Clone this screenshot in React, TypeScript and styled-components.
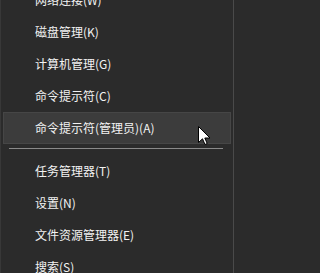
import React from 'react';
import styled, { createGlobalStyle } from 'styled-components';

type MenuEntry = { label: string; active?: boolean } | 'separator';

const entries: MenuEntry[] = [
	{ label: '网络连接(W)' },
	{ label: '磁盘管理(K)' },
	{ label: '计算机管理(G)' },
	{ label: '命令提示符(C)' },
	{ label: '命令提示符(管理员)(A)', active: true },
	'separator',
	{ label: '任务管理器(T)' },
	{ label: '设置(N)' },
	{ label: '文件资源管理器(E)' },
	{ label: '搜索(S)' },
];

const GlobalStyle = createGlobalStyle`
	html, body {
		margin: 0;
		padding: 0;
		background: #2b2b2b;
		overflow: hidden;
	}
`;

const Menu = styled.div`
	box-sizing: border-box;
	width: 234px;
	height: 300px;
	margin-top: -17px;
	background: #2b2b2b;
	border-left: 1px solid #383838;
	border-right: 1px solid #4a4a4a;
	display: flex;
	flex-direction: column;
	font-family: 'Noto Sans CJK SC', 'Noto Sans', sans-serif;
	font-size: 12px;
	color: #f2f2f2;
`;

const Item = styled.div<{ $active?: boolean }>`
	position: relative;
	box-sizing: border-box;
	height: 33px;
	margin: 0 2px;
	padding-left: 31px;
	display: flex;
	align-items: center;
	white-space: nowrap;
	background: ${(props) => (props.$active ? '#3c3c3c' : 'transparent')};
	border: 1px solid ${(props) => (props.$active ? '#464646' : 'transparent')};
`;

const Separator = styled.div`
	height: 1px;
	margin: 4px 10px 5px 8px;
	background: #8a8a8a;
`;

const Pointer = styled.svg`
	position: absolute;
	left: 194px;
	top: 13px;
`;

const Cursor = () => (
	<Pointer width="13" height="20" viewBox="0 0 13 20">
		<path
			d="M0.5 0.5 L0.5 16.5 L4.5 12.8 L7 18.5 L9.2 17.5 L6.8 12 L12 12 Z"
			fill="#ffffff"
			stroke="#000000"
			strokeWidth="1"
			strokeLinejoin="miter"
		/>
	</Pointer>
);

const App: React.FC = () => {
	return (
		<>
			<GlobalStyle />
			<Menu>
				{entries.map((entry, i) =>
					entry === 'separator' ? (
						<Separator key={i} />
					) : (
						<Item key={i} $active={entry.active}>
							{entry.label}
							{entry.active && <Cursor />}
						</Item>
					)
				)}
			</Menu>
		</>
	);
};

export default App;
